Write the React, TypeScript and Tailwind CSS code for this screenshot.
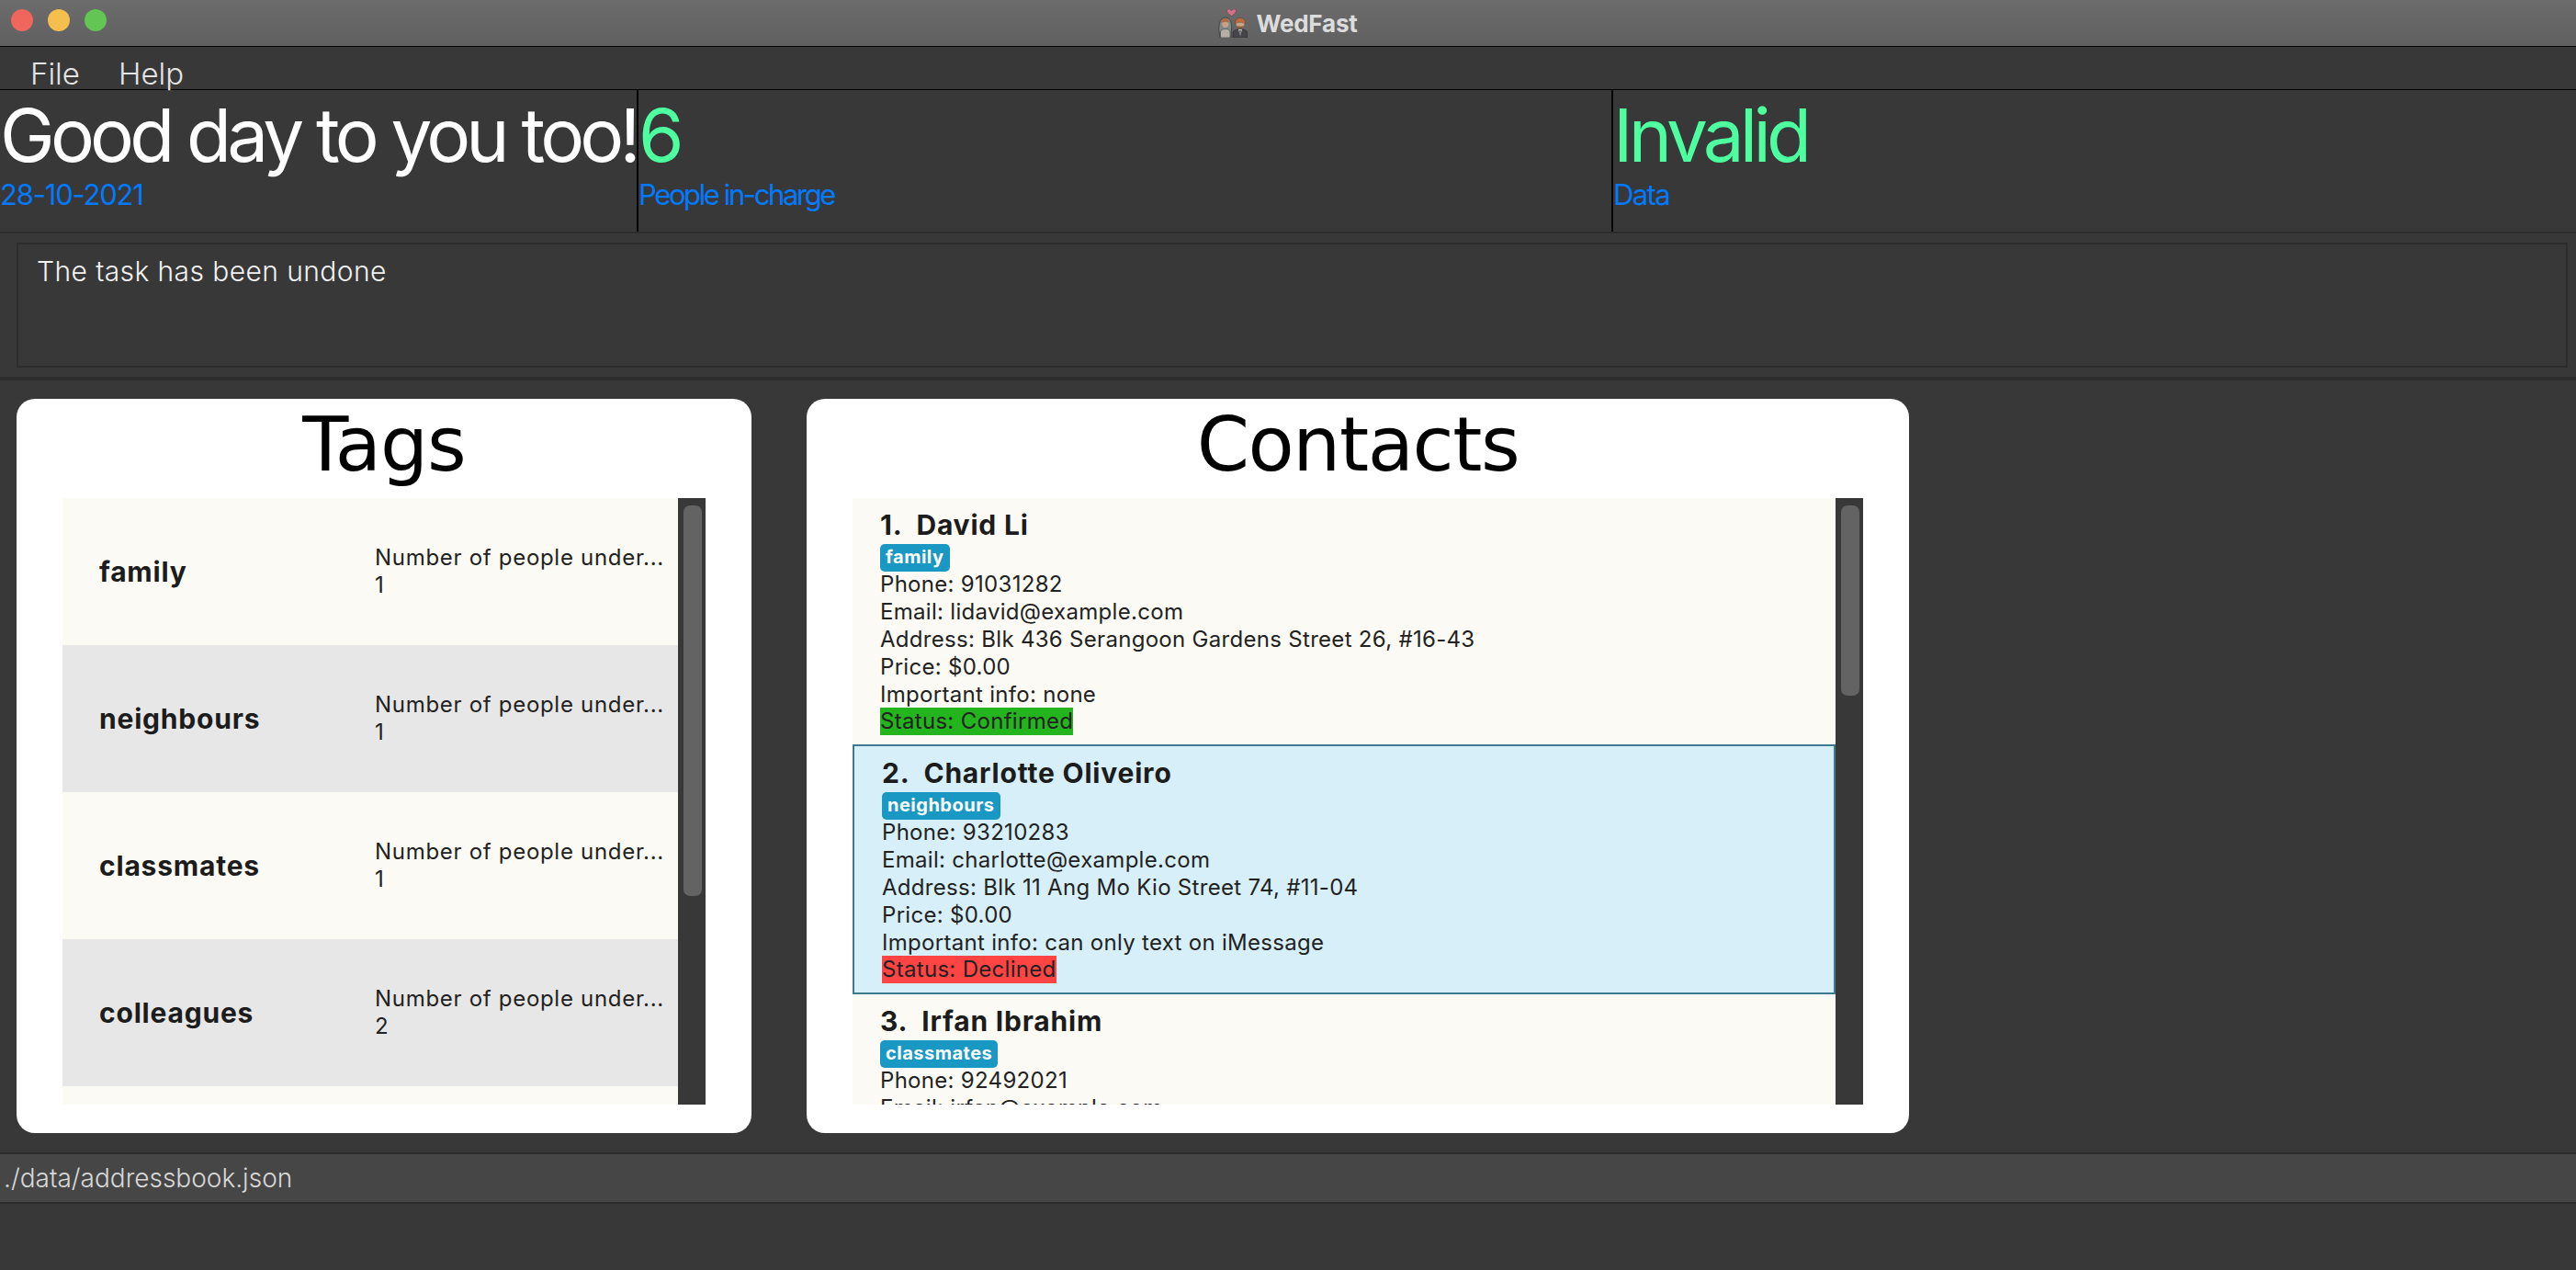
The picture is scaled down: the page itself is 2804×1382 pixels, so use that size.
import React from "react";

const tags = [
  { name: "family", count: 1 },
  { name: "neighbours", count: 1 },
  { name: "classmates", count: 1 },
  { name: "colleagues", count: 2 },
];

const contacts = [
  {
    id: 1,
    name: "David Li",
    tag: "family",
    phone: "91031282",
    email: "lidavid@example.com",
    address: "Blk 436 Serangoon Gardens Street 26, #16-43",
    info: "none",
    status: "Confirmed",
  },
  {
    id: 2,
    name: "Charlotte Oliveiro",
    tag: "neighbours",
    phone: "93210283",
    email: "charlotte@example.com",
    address: "Blk 11 Ang Mo Kio Street 74, #11-04",
    info: "can only text on iMessage",
    status: "Declined",
  },
  {
    id: 3,
    name: "Irfan Ibrahim",
    tag: "classmates",
    phone: "92492021",
    email: "irfan@example.com",
    address: "Blk 47 Tampines Street 20, #17-35",
    info: "none",
    status: "Confirmed",
  },
];

// bride, groom and heart from the window title
function CoupleIcon() {
  return (
    <svg width="32" height="31" viewBox="0 0 32 31">
      <path d="M14.500 7.500 C10.500 4.500 9.500 3 9.500 1.800 C9.500 .6 10.500 0 11.600 0 C12.800 0 14 .7 14.500 1.700 C15 .7 16.200 0 17.400 0 C18.500 0 19.500 .6 19.500 1.800 C19.500 3 18.500 4.500 14.500 7.500Z" fill="#d8708c" stroke="#444" strokeWidth="0.5" />
      <path d="M1 24 C.5 17 1.500 9.500 8 9 C13.500 9.500 15 15 14.500 22 L14 31 H2Z" fill="#7d8a8a" stroke="#3a3a3a" strokeWidth="0.8" />
      <path d="M3.500 15 C3.500 11.500 5.500 10 8 10 C10.500 10 12 11.500 12 15 C10 13 6 13 3.500 15Z" fill="#b9673c" />
      <path d="M4 15 C6 13.500 10 13.500 11.500 15 C11.500 18 10 20 7.800 20 C5.500 20 4 18 4 15Z" fill="#c9a184" />
      <path d="M2.500 31 V25 C2.500 22.500 5 21.500 7.800 21.500 C10.500 21.500 13 22.500 13 25 V31Z" fill="#b5afa6" stroke="#3a3a3a" strokeWidth="0.6" />
      <path d="M18.500 14.500 C18.500 11 20.500 9.500 24 9.500 C27.500 9.500 29.500 11 29.500 14.500 L28.500 16 C26.500 14 21.500 14 19.500 16Z" fill="#bf6a3a" stroke="#3a3a3a" strokeWidth="0.5" />
      <path d="M19.500 15.500 C21.500 14 26.500 14 28.500 15.500 C28.500 19 27 21 24 21 C21 21 19.500 19 19.500 15.500Z" fill="#c9a184" />
      <path d="M19.800 18 C21 19 27 19 28.200 18 C28 20.500 26 21.500 24 21.500 C22 21.500 20 20.500 19.800 18Z" fill="#8a5a3c" />
      <path d="M16 31 V25.500 C16 23 19.500 22 24 22 C28.500 22 31.500 23 31.500 25.500 V31Z" fill="#45454b" stroke="#2c2c2c" strokeWidth="0.7" />
      <path d="M22 22 L24 29 L26 22Z" fill="#d2d2d2" />
      <path d="M23.300 23 L24 29 L24.700 23Z" fill="#222" />
    </svg>
  );
}

function HeaderCell({ title, sub, subClass, green, className }: { title: string; sub: string; subClass: string; green?: boolean; className: string }) {
  return (
    <div className={className}>
      <div className={`h-[56px] text-[80px] leading-[56px] font-[Inter] font-normal tracking-[-4.8px] whitespace-nowrap ${green ? "text-[#4dff9e]" : "text-white"}`}>
        {title}
      </div>
      <div className={`mt-[20px] text-[31px] leading-[34px] font-[Inter] text-[#007aff] whitespace-nowrap ${subClass}`}>{sub}</div>
    </div>
  );
}

function TagRow({ name, count, odd }: { name: string; count: number; odd: boolean }) {
  return (
    <div className={`h-[160px] shrink-0 flex items-center pl-[40px] ${odd ? "bg-[#e7e7e7]" : "bg-[#fbfaf5]"}`}>
      <div className="w-[300px] text-[30px] leading-[34px] font-[Inter] font-bold tracking-[0.8px] text-[#1c1c1c]">{name}</div>
      <div className="text-[24px] leading-[30px] font-[Inter] text-[#222] tracking-[0.7px] whitespace-nowrap">
        <div>Number of people under...</div>
        <div>{count}</div>
      </div>
    </div>
  );
}

function ContactRow({ c, selected }: { c: (typeof contacts)[number]; selected: boolean }) {
  return (
    <div
      className={
        selected
          ? "h-[272px] shrink-0 bg-[#d6eff9] border-2 border-[#3e7b91] pl-[30px] pt-[13px]"
          : "h-[268px] shrink-0 bg-[#fbfaf5] pl-[30px] pt-[13px]"
      }
    >
      <div className="h-[35px] text-[30px] leading-[32px] font-[Inter] font-bold tracking-[0.8px] text-[#1c1c1c] whitespace-pre">{`${c.id}.  ${c.name}`}</div>
      <div className="text-[24px] leading-[30px] font-[Inter] text-[#222] tracking-[0.3px] whitespace-nowrap">
        <div className="h-[31px]">
          <span className="inline-block h-[30px] rounded-[5px] bg-[#1a98c4] px-[6px] text-[20px] leading-[29px] font-bold tracking-[0.5px] text-white">{c.tag}</span>
        </div>
        <div>Phone: {c.phone}</div>
        <div>Email: {c.email}</div>
        <div>Address: {c.address}</div>
        <div>Price: $0.00</div>
        <div>Important info: {c.info}</div>
        <div className="-mt-[1px]">
          <span className={c.status === "Confirmed" ? "inline-block bg-[#24b41e]" : "inline-block bg-[#ff4444]"}>Status: {c.status}</span>
        </div>
      </div>
    </div>
  );
}

function Scrollbar({ thumb }: { thumb: string }) {
  return (
    <div className="w-[30px] shrink-0 bg-[#383838] pt-[8px] pl-[6px]">
      <div className={`w-[20px] rounded-[7px] bg-[#636363] ${thumb}`} />
    </div>
  );
}

export default function App() {
  return (
    <div className="w-[2804px] h-[1382px] flex flex-col overflow-hidden bg-[#383838] font-[Inter]">
      <div className="relative h-[51px] shrink-0 flex items-center justify-center border-b border-black bg-gradient-to-b from-[#6c6c6c] to-[#606061]">
        <div className="absolute left-[12px] top-[10px] flex gap-[16px]">
          <span className="size-[24px] rounded-full bg-[#f1665c]" />
          <span className="size-[24px] rounded-full bg-[#f5bf4f]" />
          <span className="size-[24px] rounded-full bg-[#62c554]" />
        </div>
        <div className="flex items-center gap-[9px]">
          <CoupleIcon />
          <span className="text-[26px] font-bold text-[#dcdcdc] tracking-[-0.2px]">WedFast</span>
        </div>
      </div>

      <div className="h-[47px] shrink-0 flex gap-[42px] pl-[33px] pt-[11px] border-b border-black text-[33px] leading-[36px] font-light text-[#e4e4e4]">
        <span>File</span>
        <span>Help</span>
      </div>

      <div className="h-[154px] shrink-0 flex">
        <HeaderCell title="Good day to you too!" sub="28-10-2021" subClass="tracking-[-1.2px]" className="w-[695px] shrink-0 border-r-2 border-black pt-[21px] overflow-hidden" />
        <HeaderCell title="6" sub="People in-charge" subClass="tracking-[-2.4px]" green className="w-[1061px] shrink-0 border-r-2 border-black pt-[21px]" />
        <HeaderCell title="Invalid" sub="Data" subClass="tracking-[-1.6px]" green className="flex-1 pt-[21px]" />
      </div>

      <div className="h-[162px] shrink-0 border-t-2 border-b-4 border-[#2c2c2c] pl-[18px] pr-[9px] pt-[10px] pb-[10px]">
        <div className="h-full border-2 border-[#2c2c2c] pl-[20px] pt-[11px] text-[30px] leading-[36px] font-light tracking-[0.4px] text-[#f2f2f2]">The task has been undone</div>
      </div>

      <div className="flex-1 min-h-0 flex items-start gap-[60px] pl-[18px] pt-[20px]">
        <div className="w-[800px] h-[799px] shrink-0 rounded-[20px] bg-white px-[50px] flex flex-col">
          <div className="h-[108px] shrink-0 text-center text-[82px] leading-[100px] tracking-[-1px] font-['DejaVu_Sans',sans-serif] text-black">Tags</div>
          <div className="h-[660px] flex overflow-hidden">
            <div className="w-[670px] shrink-0 flex flex-col overflow-hidden bg-[#fbfaf5]">
              {tags.map((t, i) => (
                <TagRow key={t.name} name={t.name} count={t.count} odd={i % 2 === 1} />
              ))}
            </div>
            <Scrollbar thumb="h-[425px]" />
          </div>
        </div>

        <div className="w-[1200px] h-[799px] shrink-0 rounded-[20px] bg-white px-[50px] flex flex-col">
          <div className="h-[108px] shrink-0 text-center text-[82px] leading-[100px] tracking-[-1.4px] font-['DejaVu_Sans',sans-serif] text-black">Contacts</div>
          <div className="h-[660px] flex overflow-hidden">
            <div className="w-[1070px] shrink-0 flex flex-col overflow-hidden bg-[#fbfaf5]">
              {contacts.map((c) => (
                <ContactRow key={c.id} c={c} selected={c.id === 2} />
              ))}
            </div>
            <Scrollbar thumb="h-[207px]" />
          </div>
        </div>
      </div>

      <div className="h-[56px] shrink-0 border-y-2 border-[#2c2c2c] bg-[#464646] text-[28px] leading-[52px] font-light text-[#d8d8d8] pl-[4px]">./data/addressbook.json</div>
      <div className="h-[72px] shrink-0 bg-[#383838]" />
    </div>
  );
}
